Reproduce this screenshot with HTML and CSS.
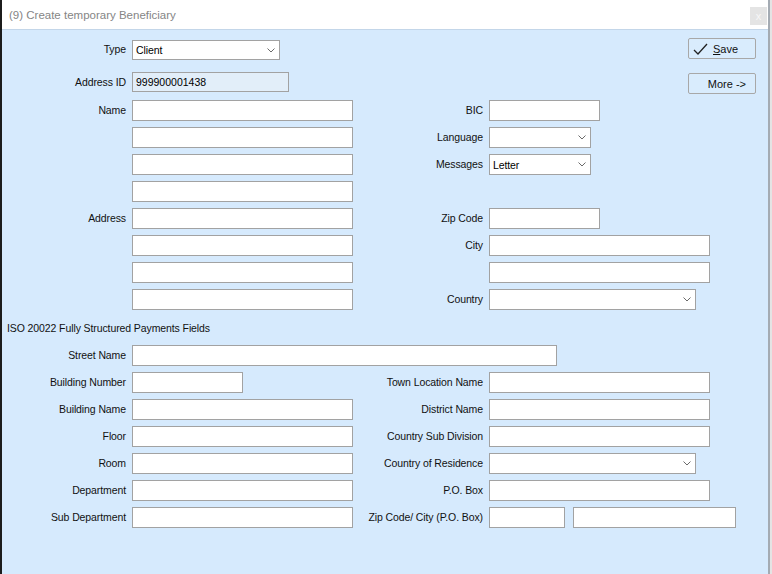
FILE: index.html
```html
<!DOCTYPE html>
<html lang="en">
<head>
    <meta charset="UTF-8">
    <title>Create temporary Beneficiary</title>
    <link rel="stylesheet" href="styles.css">
</head>
<body>
    <div class="window">
        <!-- Title bar -->
        <div class="titlebar">
            <span class="title">(9) Create temporary Beneficiary</span>
            <span class="close">x</span>
        </div>

        <div class="content">
            <!-- Address block -->
            <div class="grid top">
                <label class="l1">Type</label>
                <div class="combo f1 w147 first"><span>Client</span>
                    <svg class="chev" viewBox="0 0 8 5"><polyline points="0.5,0.5 4,4 7.5,0.5"/></svg>
                </div>
                <button class="btn save f2">
                    <svg class="check" viewBox="0 0 15 12"><polyline points="1,7 5,11 14,1"/></svg>
                    <span><u>S</u>ave</span>
                </button>

                <label class="l1">Address ID</label>
                <input class="text f1 w156 readonly" type="text" value="999900001438" readonly>
                <button class="btn more f2">More -&gt;</button>

                <label class="l1">Name</label>
                <input class="text f1 w221" type="text">
                <label class="l2">BIC</label>
                <input class="text f2 w110" type="text">

                <input class="text f1 w221" type="text">
                <label class="l2">Language</label>
                <div class="combo f2 w101"><span></span>
                    <svg class="chev" viewBox="0 0 8 5"><polyline points="0.5,0.5 4,4 7.5,0.5"/></svg>
                </div>

                <input class="text f1 w221" type="text">
                <label class="l2">Messages</label>
                <div class="combo f2 w101"><span>Letter</span>
                    <svg class="chev" viewBox="0 0 8 5"><polyline points="0.5,0.5 4,4 7.5,0.5"/></svg>
                </div>

                <input class="text f1 w221" type="text">

                <label class="l1">Address</label>
                <input class="text f1 w221" type="text">
                <label class="l2">Zip Code</label>
                <input class="text f2 w110" type="text">

                <input class="text f1 w221" type="text">
                <label class="l2">City</label>
                <input class="text f2 w221" type="text">

                <input class="text f1 w221" type="text">
                <input class="text f2 w221" type="text">

                <input class="text f1 w221" type="text">
                <label class="l2">Country</label>
                <div class="combo f2 w207"><span></span>
                    <svg class="chev" viewBox="0 0 8 5"><polyline points="0.5,0.5 4,4 7.5,0.5"/></svg>
                </div>
            </div>

            <div class="iso-title">ISO 20022 Fully Structured Payments Fields</div>

            <!-- ISO 20022 structured fields -->
            <div class="grid iso">
                <label class="l1">Street Name</label>
                <input class="text wide w425" type="text">

                <label class="l1">Building Number</label>
                <input class="text f1 w110" type="text">
                <label class="l2">Town Location Name</label>
                <input class="text f2 w221" type="text">

                <label class="l1">Building Name</label>
                <input class="text f1 w221" type="text">
                <label class="l2">District Name</label>
                <input class="text f2 w221" type="text">

                <label class="l1">Floor</label>
                <input class="text f1 w221" type="text">
                <label class="l2">Country Sub Division</label>
                <input class="text f2 w221" type="text">

                <label class="l1">Room</label>
                <input class="text f1 w221" type="text">
                <label class="l2">Country of Residence</label>
                <div class="combo f2 w207"><span></span>
                    <svg class="chev" viewBox="0 0 8 5"><polyline points="0.5,0.5 4,4 7.5,0.5"/></svg>
                </div>

                <label class="l1">Department</label>
                <input class="text f1 w221" type="text">
                <label class="l2">P.O. Box</label>
                <input class="text f2 w221" type="text">

                <label class="l1">Sub Department</label>
                <input class="text f1 w221" type="text">
                <label class="l2">Zip Code/ City (P.O. Box)</label>
                <div class="pair f2">
                    <input class="text w75" type="text">
                    <input class="text w163" type="text">
                </div>
            </div>
        </div>
    </div>
</body>
</html>
```

FILE: styles.css
```css
/* Windows-style dialog */
body {
    margin: 0;
    background-color: #e4e4e4;
    font-family: "Liberation Sans", Arial, sans-serif;
    font-size: 10.5px;
    letter-spacing: -0.1px;
    color: #111;
}

.window {
    width: 766px;
    height: 574px;
    border-left: 2px solid #1c1c1c;
    border-right: 2px solid #a4abb3;
    background-color: #d6eafd;
    overflow: hidden;
}

.titlebar {
    height: 29px;
    background-color: #fff;
    border-bottom: 1px solid #c3d6e9;
    display: flex;
    justify-content: space-between;
    align-items: center;
    padding-left: 7px;
}

.title {
    font-size: 11.5px;
    letter-spacing: 0;
    color: #858585;
}

.close {
    align-self: flex-start;
    margin-top: 7px;
    margin-right: 1px;
    width: 17px;
    height: 18px;
    background-color: #e4e4e4;
    color: #f7f7f7;
    font-size: 11px;
    display: flex;
    align-items: center;
    justify-content: center;
}

.content {
    padding-top: 9px;
}

/* Form grid: label | field | label | field */
.grid {
    display: grid;
    grid-template-columns: 124px 221px 124px 267px;
    column-gap: 6px;
    row-gap: 6px;
    align-items: start;
}

.top {
    grid-template-rows: 27px 22px;
    grid-auto-rows: 21px;
}

.iso {
    grid-auto-rows: 21px;
}

.l1 { grid-column: 1; }
.f1 { grid-column: 2; }
.l2 { grid-column: 3; }
.f2 { grid-column: 4; }
.wide { grid-column: 2 / 5; }

label {
    text-align: right;
    line-height: 21px;
    white-space: nowrap;
}

.text {
    display: block;
    height: 21px;
    box-sizing: border-box;
    margin: 0;
    padding: 0 3px;
    border: 1px solid #a2a2a2;
    background-color: #fff;
    font: inherit;
    color: #000;
}

.readonly {
    height: 20px;
    background-color: #e2eef9;
}

.combo {
    height: 21px;
    box-sizing: border-box;
    border: 1px solid #a2a2a2;
    background-color: #fff;
    display: flex;
    align-items: center;
    justify-content: space-between;
    padding: 0 4px 0 3px;
    color: #000;
}

.combo.first {
    height: 20px;
    margin-top: 1px;
}

.chev {
    width: 8px;
    height: 5px;
    fill: none;
    stroke: #6a6a6a;
    stroke-width: 1;
}

.pair {
    display: flex;
    gap: 8px;
}

/* Field widths */
.w75 { width: 76px; }
.w101 { width: 102px; }
.w110 { width: 111px; }
.w147 { width: 148px; }
.w156 { width: 157px; }
.w163 { width: 163px; }
.w207 { width: 207px; }
.w221 { width: 221px; }
.w425 { width: 425px; }

/* Buttons */
.btn {
    justify-self: end;
    width: 68px;
    height: 21px;
    box-sizing: border-box;
    border: 1px solid #a8a8a8;
    border-radius: 2px;
    background-color: #d9ecfd;
    font: inherit;
    font-size: 11px;
    color: #111;
    display: flex;
    align-items: center;
    margin: 0;
}

.save {
    margin-top: -1px;
    padding: 0 0 0 4px;
    gap: 5px;
}

.check {
    width: 15px;
    height: 12px;
    fill: none;
    stroke: #222;
    stroke-width: 1.3;
}

.more {
    margin-top: 1px;
    justify-content: flex-end;
    padding: 0 9px 0 0;
}

.iso-title {
    margin: 11px 0 10px 5px;
    line-height: 14px;
}
```
